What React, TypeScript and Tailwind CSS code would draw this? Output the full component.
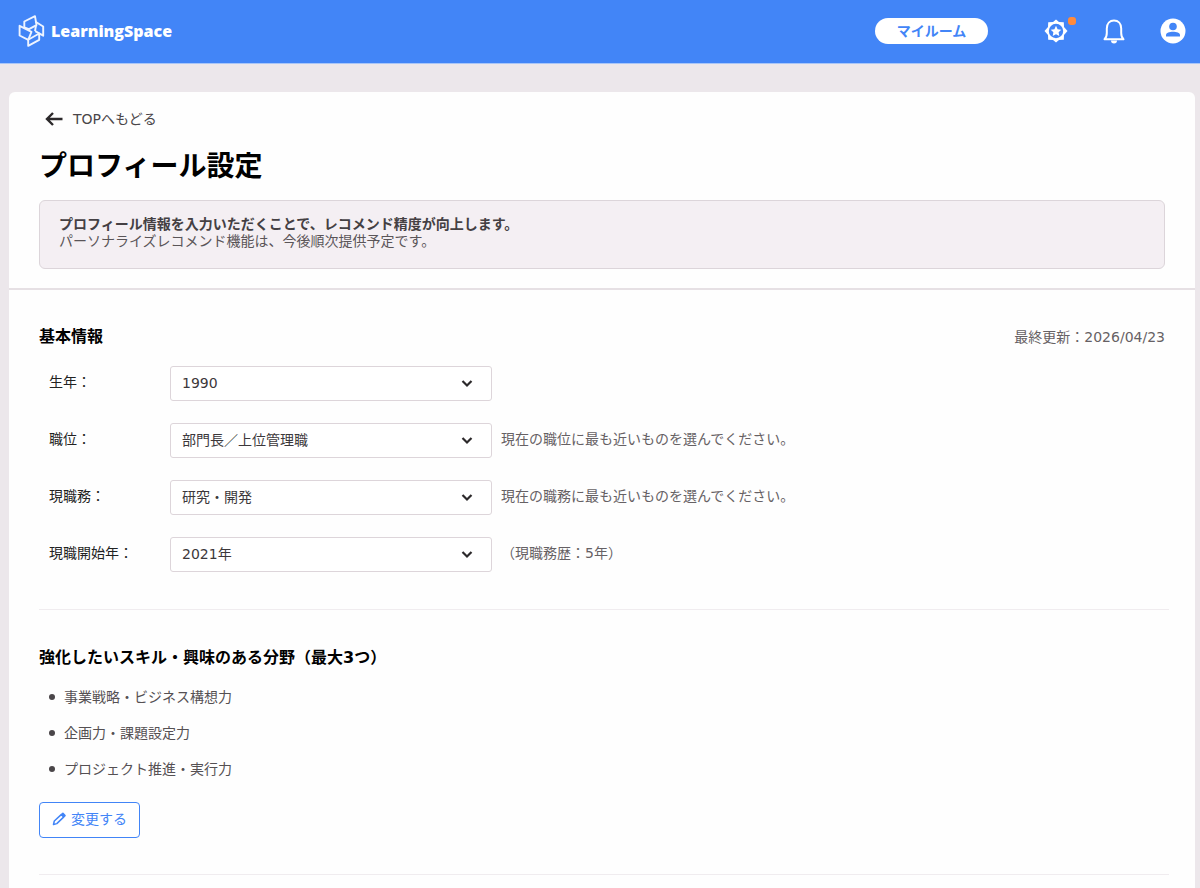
import { useState } from "react";

type Field = {
  id: string;
  label: string;
  value: string;
  options: string[];
  hint?: string;
};

const fields: Field[] = [
  { id: "birth", label: "生年：", value: "1990", options: ["1989", "1990", "1991"] },
  {
    id: "position",
    label: "職位：",
    value: "部門長／上位管理職",
    options: ["部門長／上位管理職"],
    hint: "現在の職位に最も近いものを選んでください。",
  },
  {
    id: "job",
    label: "現職務：",
    value: "研究・開発",
    options: ["研究・開発"],
    hint: "現在の職務に最も近いものを選んでください。",
  },
  {
    id: "start",
    label: "現職開始年：",
    value: "2021年",
    options: ["2020年", "2021年", "2022年"],
    hint: "（現職務歴：5年）",
  },
];

const skills = ["事業戦略・ビジネス構想力", "企画力・課題設定力", "プロジェクト推進・実行力"];

function Logo() {
  return (
    <svg viewBox="0 0 28 34" className="h-[34px] w-7" fill="none" stroke="#eef4ff" strokeWidth="1.900" strokeLinejoin="round" aria-hidden="true">
      <path d="M6.300 13.500V7.500L17 2.200l1.500 9-7.500 4z" />
      <path d="M17.500 7.800l7.700 4.700v9.200l-8-4.500" />
      <path d="M18 11.500l-1 5.700" />
      <path d="M1.600 11.800v9.700l8.600 4.300 3.300-8z" />
      <path d="M10.200 25.800l11-6.300v6.300l-11 6z" />
    </svg>
  );
}

function BadgeIcon() {
  return (
    <svg viewBox="0 0 24 24" className="size-6" aria-hidden="true">
      <path
        fill="white"
        fillRule="evenodd"
        d="M12 .5l3 2.500 4.800.2.200 4.800 3.500 4-3.500 4-.2 4.800-4.800.2-3 2.500-3-2.500-4.800-.2L4 16 .5 12 4 8l.2-4.800L9 3zM12 4.800a7.200 7.200 0 100 14.400 7.200 7.200 0 000-14.400z"
      />
      <path fill="white" d="M12 6.800l1.600 3.400 3.700.5-2.700 2.600.7 3.700-3.300-1.800L8.700 17l.7-3.700-2.700-2.600 3.700-.5z" />
    </svg>
  );
}

function BellIcon() {
  return (
    <svg viewBox="0 0 24 28" className="h-7 w-6" aria-hidden="true">
      <path d="M2.500 22.300C4.500 20.500 4.800 18.500 4.800 16v-4.500c0-5 3-8 7.200-8s7.200 3 7.200 8V16c0 2.500.3 4.500 2.300 6.300z" fill="none" stroke="white" strokeWidth="2" strokeLinejoin="round" />
      <path d="M9 23.500h6a3 3 0 01-6 0z" fill="white" />
    </svg>
  );
}

function UserIcon() {
  return (
    <svg viewBox="0 0 26 26" className="size-[26px]" aria-hidden="true">
      <circle cx="13" cy="13" r="12.500" fill="white" />
      <circle cx="13" cy="8.500" r="3.800" fill="#4285f7" />
      <path d="M6 18.500v-1.500c0-2 3.500-3.200 7-3.200s7 1.200 7 3.200v1.500z" fill="#4285f7" />
    </svg>
  );
}

function PencilIcon() {
  return (
    <svg viewBox="0 0 16 16" className="size-4" fill="none" stroke="#4285f7" strokeLinejoin="round" aria-hidden="true">
      <path d="M2.500 13.500l.8-3.500 6.900-6.400 2.400 2.500-6.800 6.500z" strokeWidth="1.500" />
      <path d="M11 3.200l.9-.8 2.100 2.200-.9.800z" strokeWidth="1.600" fill="#4285f7" />
    </svg>
  );
}

function SelectRow({ field }: { field: Field }) {
  const [value, setValue] = useState(field.value);
  return (
    <div className="flex items-center">
      <label htmlFor={field.id} className="w-[121px] shrink-0 pb-1 text-[#222]">
        {field.label}
      </label>
      <div className="grid w-[322px] shrink-0 items-center">
        <select
          id={field.id}
          value={value}
          onChange={(e) => setValue(e.target.value)}
          className="col-start-1 row-start-1 h-[35px] w-full appearance-none rounded-[3px] border border-[#ddd5da] bg-white px-[11px] pb-[2px] text-[#3c383b]"
        >
          {field.options.map((o) => (
            <option key={o}>{o}</option>
          ))}
        </select>
        <svg viewBox="0 0 12 8" className="pointer-events-none col-start-1 row-start-1 mr-[19px] h-2 w-3 justify-self-end" fill="none" stroke="#2c292b" strokeWidth="2.200" aria-hidden="true">
          <path d="M1.500 1L6 5.500 10.500 1" />
        </svg>
      </div>
      {field.hint && <p className="ml-[9px] pb-[3px] text-[#666164]">{field.hint}</p>}
    </div>
  );
}

export default function App() {
  return (
    <div className="min-h-screen bg-[#ece7eb] font-['DejaVu_Sans','Noto_Sans_CJK_JP',sans-serif] text-sm">
      <header className="flex h-16 items-center border-b border-[#a9c6f8] bg-[#4285f7] pr-[14px] pb-[2px] pl-[18px]">
        <a href="#" className="flex items-center gap-[5px] text-white">
          <Logo />
          <span className="font-['Open_Sans',sans-serif] text-base font-extrabold">LearningSpace</span>
        </a>
        <a href="#" className="mr-14 ml-auto flex h-[26px] w-[113px] items-center justify-center rounded-full bg-white font-bold text-[#4285f7]">
          マイルーム
        </a>
        <nav className="flex items-center gap-[34px]">
          <button type="button" aria-label="バッジ" className="relative">
            <BadgeIcon />
            <span className="absolute -top-[2px] -right-2 size-2 rounded-[3px] bg-[#ff8a3c]" />
          </button>
          <button type="button" aria-label="お知らせ">
            <BellIcon />
          </button>
          <button type="button" aria-label="アカウント">
            <UserIcon />
          </button>
        </nav>
      </header>

      <main className="mt-7 mr-[5px] ml-[9px] rounded-t-md bg-[#fefefe] pb-10">
        <div className="border-b-2 border-[#e6e0e4] px-[30px] pt-4 pb-[19px]">
          <a href="#" className="ml-[6px] flex w-fit items-center gap-[10px] leading-[22px] text-[#4a4649]">
            <svg viewBox="0 0 18 14" className="h-[14px] w-[18px]" fill="none" stroke="#2c292b" strokeWidth="2.400" aria-hidden="true">
              <path d="M17.500 7H2M8 1L2 7l6 6" />
            </svg>
            TOPへもどる
          </a>
          <h1 className="mt-4 text-[28px] leading-[42px] font-bold text-black">プロフィール設定</h1>
          <div className="mt-3 rounded-md border border-[#dcd5da] bg-[#f4eff3] px-[19px] pt-[15px] pb-[18px] leading-[17px] text-[#5a5558]">
            <p className="font-bold text-[#444043]">プロフィール情報を入力いただくことで、レコメンド精度が向上します。</p>
            <p>パーソナライズレコメンド機能は、今後順次提供予定です。</p>
          </div>
        </div>

        <section className="mr-[26px] ml-[30px] border-b border-[#f0ecef] pt-[35px] pb-[37px]">
          <div className="flex items-center justify-between pr-1">
            <h2 className="text-base font-bold text-black">基本情報</h2>
            <p className="text-[#666164]">最終更新：2026/04/23</p>
          </div>
          <div className="mt-[17px] ml-[10px] flex flex-col gap-[22px]">
            {fields.map((f) => (
              <SelectRow key={f.id} field={f} />
            ))}
          </div>
        </section>

        <section className="mr-[26px] ml-[30px] border-b border-[#f0ecef] pt-9 pb-9">
          <h2 className="text-base font-bold text-black">強化したいスキル・興味のある分野（最大3つ）</h2>
          <ul className="mt-[17px] flex flex-col gap-4 pl-[10px] leading-5 text-[#555053]">
            {skills.map((s) => (
              <li key={s} className="flex items-center gap-[9px] before:size-[6px] before:rounded-full before:bg-[#4a4649]">
                {s}
              </li>
            ))}
          </ul>
          <button type="button" className="mt-[23px] flex h-9 items-center gap-1 rounded border border-[#4285f7] bg-white pr-3 pb-[2px] pl-[11px] text-[#4285f7]">
            <PencilIcon />
            変更する
          </button>
        </section>
      </main>
    </div>
  );
}
